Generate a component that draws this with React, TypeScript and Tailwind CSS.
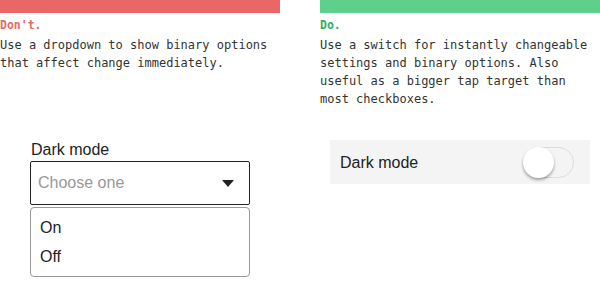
function Guide({
  tone,
  title,
  children,
}: {
  tone: "bad" | "good";
  title: string;
  children: React.ReactNode;
}) {
  const bad = tone === "bad";
  return (
    <div className="font-['DejaVu_Sans_Mono','Liberation_Mono',monospace]">
      <div className={`h-[13px] ${bad ? "bg-[#e96767]" : "bg-[#5ed08b]"}`} />
      <div
        className={`mt-[5px] text-[11.5px] leading-[14px] font-bold ${
          bad ? "text-[#e56a6a]" : "text-[#2fae62]"
        }`}
      >
        {title}
      </div>
      <p className="mt-[4px] text-[12px] leading-[18px] text-[#333]">{children}</p>
    </div>
  );
}

export default function App() {
  return (
    <div className="w-[600px] h-[284px] bg-white font-['Liberation_Sans',Arial,sans-serif] overflow-hidden">
      <div className="grid grid-cols-[280px_280px] gap-x-[40px] h-[140px]">
        <Guide tone="bad" title="Don't.">
          Use a dropdown to show binary options that affect change immediately.
        </Guide>
        <Guide tone="good" title="Do.">
          Use a switch for instantly changeable settings and binary options. Also useful as
          a bigger tap target than most checkboxes.
        </Guide>
      </div>
      <div className="grid grid-cols-[280px_280px] gap-x-[40px]">
        {/* Don't: dropdown */}
        <div className="ml-[30px] w-[220px]">
          <div className="mt-px text-[16px] leading-[18px] text-[#222] pl-px">Dark mode</div>
          <div className="mt-[2px] h-[44px] border border-[#222] rounded-[2px] flex items-center justify-between pl-[7px] pr-[15px]">
            <span className="text-[16px] text-[#999]">Choose one</span>
            <svg width="12" height="7" viewBox="0 0 12 7">
              <path d="M0 0h12L6 7z" fill="#222" />
            </svg>
          </div>
          <div className="mt-[2px] h-[70px] border border-[#999] rounded-[4px] flex flex-col justify-center gap-[11px] pl-[9px] text-[16px] leading-[18px] text-[#222]">
            <div>On</div>
            <div>Off</div>
          </div>
        </div>
        {/* Do: switch */}
        <div className="ml-[10px] w-[260px] h-[44px] bg-[#f4f4f4] flex items-center justify-between pl-[10px] pr-[16px]">
          <span className="text-[16px] leading-[18px] pt-px text-[#222]">Dark mode</span>
          <div className="w-[51px] h-[31px] rounded-full border border-[#ddd] bg-[#f4f4f4] relative">
            <div className="absolute -left-px -top-px w-[31px] h-[31px] rounded-full bg-white shadow-[0_2px_3px_rgba(0,0,0,0.35)]" />
          </div>
        </div>
      </div>
    </div>
  );
}
